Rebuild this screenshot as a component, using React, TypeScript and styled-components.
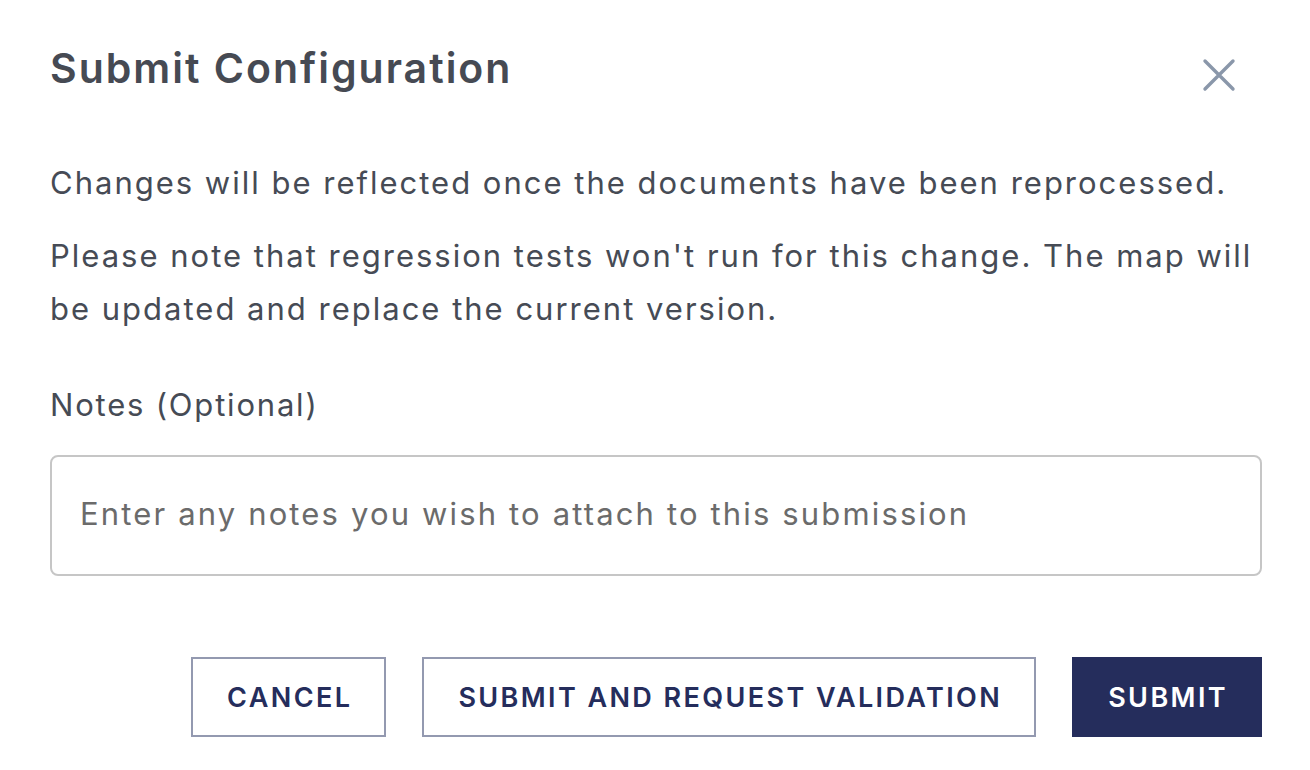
import * as React from 'react'
import styled, { createGlobalStyle } from 'styled-components'

const GlobalStyle = createGlobalStyle`
    html, body {
        margin: 0;
        padding: 0;
        background: #ffffff;
    }
    body {
        font-family: Inter, "Noto Sans", "Liberation Sans", sans-serif;
        -webkit-font-smoothing: antialiased;
    }
    * {
        box-sizing: border-box;
    }
`

const Dialog = styled.div`
    width: 1310px;
    height: 770px;
    padding: 36px 48px 0 50px;
    background: #ffffff;
    display: flex;
    flex-direction: column;
`

const Header = styled.div`
    display: flex;
    justify-content: space-between;
    align-items: flex-start;
`

const Title = styled.h2`
    margin: 0;
    font-size: 41px;
    line-height: 64px;
    font-weight: 600;
    color: #464a53;
    letter-spacing: 2px;
`

const CloseButton = styled.button`
    border: none;
    background: none;
    padding: 0;
    margin: 20px 24px 0 0;
    width: 38px;
    height: 38px;
    display: flex;
    align-items: center;
    justify-content: center;
    cursor: pointer;
    color: #8a97aa;
`

const Body = styled.div`
    margin-top: 56px;
    display: flex;
    flex-direction: column;
    gap: 20px;
`

const Paragraph = styled.p`
    margin: 0;
    font-size: 31px;
    line-height: 53px;
    font-weight: 400;
    color: #464b55;
    letter-spacing: 2px;
`

const Field = styled.div`
    margin-top: 46px;
    display: flex;
    flex-direction: column;
    gap: 26px;
`

const Label = styled.label`
    font-size: 31px;
    line-height: 48px;
    color: #464b55;
    letter-spacing: 1.8px;
`

const NotesInput = styled.input`
    width: 100%;
    height: 121px;
    border: 2px solid #c6c6c6;
    border-radius: 8px;
    padding: 0 28px 4px;
    font-family: inherit;
    font-size: 31px;
    letter-spacing: 2.15px;
    color: #464b55;
    outline: none;
    &::placeholder {
        color: #6b6b6b;
    }
`

const Actions = styled.div`
    margin-top: 81px;
    display: flex;
    justify-content: flex-end;
    gap: 36px;
`

const ActionButton = styled.button<{ primary?: boolean }>`
    height: 80px;
    padding: 0 32px 0 34px;
    font-family: inherit;
    font-size: 27px;
    font-weight: 600;
    letter-spacing: 2.4px;
    text-transform: uppercase;
    cursor: pointer;
    border: 2px solid ${p => p.primary ? '#252d5c' : '#9399b0'};
    background: ${p => p.primary ? '#252d5c' : '#ffffff'};
    color: ${p => p.primary ? '#ffffff' : '#252d5c'};
`

export default function App() {
    return <>
        <GlobalStyle />
        <Dialog>
            <Header>
                <Title>Submit Configuration</Title>
                <CloseButton aria-label='Close'>
                    <svg width='34' height='34' viewBox='0 0 34 34' fill='none'>
                        <path d='M3 3 L31 31 M31 3 L3 31' stroke='currentColor' strokeWidth='3.4' strokeLinecap='round' />
                    </svg>
                </CloseButton>
            </Header>
            <Body>
                <Paragraph>Changes will be reflected once the documents have been reprocessed.</Paragraph>
                <Paragraph>Please note that regression tests won't run for this change. The map will be updated and replace the current version.</Paragraph>
            </Body>
            <Field>
                <Label htmlFor='notes'>Notes (Optional)</Label>
                <NotesInput id='notes' placeholder='Enter any notes you wish to attach to this submission' />
            </Field>
            <Actions>
                <ActionButton>Cancel</ActionButton>
                <ActionButton>Submit and request validation</ActionButton>
                <ActionButton primary>Submit</ActionButton>
            </Actions>
        </Dialog>
    </>
}
